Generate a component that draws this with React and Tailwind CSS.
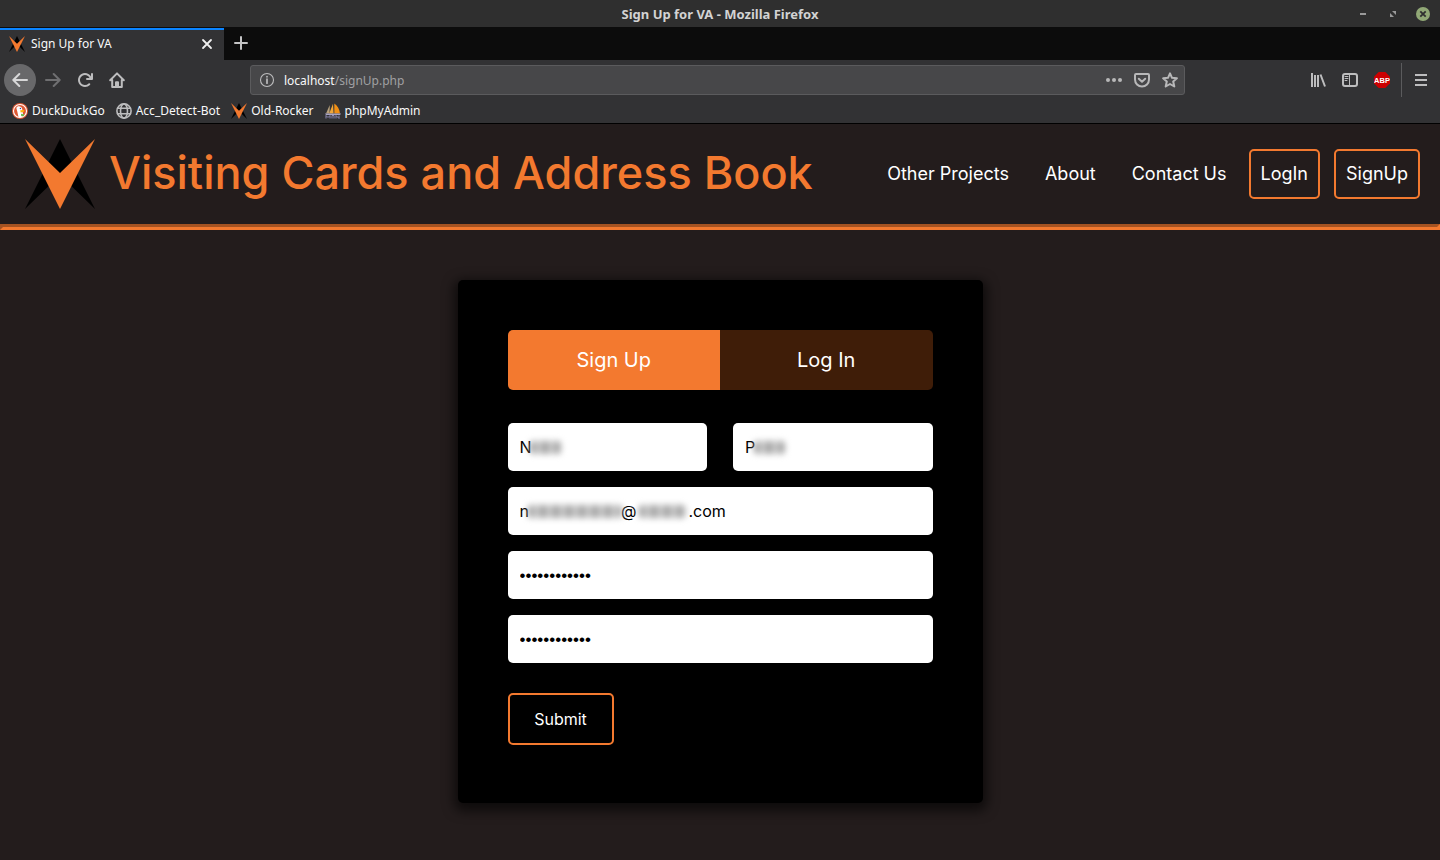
import React from "react";

function Mark({ className }) {
  return (
    <svg viewBox="0 0 70 70" className={className} aria-hidden="true">
      <polygon points="35,0 70,70 35,36 0,70" fill="#000" />
      <polygon points="0,0 35,34 70,0 35,70" fill="#f3792f" />
    </svg>
  );
}

function Icon({ children, className = "size-4", box = "0 0 16 16" }) {
  return (
    <svg
      viewBox={box}
      className={className}
      fill="none"
      stroke="currentColor"
      strokeWidth="2"
      strokeLinecap="round"
      strokeLinejoin="round"
      aria-hidden="true"
    >
      {children}
    </svg>
  );
}

function TitleBar() {
  return (
    <div className="grid h-[27px] grid-cols-[1fr_auto_1fr] items-center bg-[#2f2f2f]">
      <span />
      <span className="pt-px text-[13px] leading-5 font-bold text-[#d3d3d3]">Sign Up for VA - Mozilla Firefox</span>
      <div className="flex items-center justify-end gap-4 pr-[10px] text-[#9a9a9a]">
        <button aria-label="Minimize" className="flex size-[14px]">
          <Icon className="size-[14px]" box="0 0 14 14">
            <path d="M4 7h6" strokeLinecap="butt" />
          </Icon>
        </button>
        <button aria-label="Restore" className="flex size-[14px]">
          <Icon className="size-[14px]" box="0 0 14 14">
            <path d="M6 4h4v4zM4 6v4h4z" fill="currentColor" stroke="none" />
          </Icon>
        </button>
        <button aria-label="Close window" className="flex size-[14px]">
          <Icon className="size-[14px]" box="0 0 14 14">
            <circle cx="7" cy="7" r="7" fill="#91a876" stroke="none" />
            <path d="M4.3 4.3l5.4 5.4M9.7 4.3L4.3 9.7" stroke="#2f2f2f" strokeWidth="1.8" strokeLinecap="butt" />
          </Icon>
        </button>
      </div>
    </div>
  );
}

function TabStrip() {
  return (
    <div className="flex h-[33px] bg-[#0c0c0c] pt-px">
      <div className="flex w-56 items-center border-t-2 border-[#0a84ff] bg-[#323234] pr-[11px] pb-[2px] pl-[9px]">
        <Mark className="size-4" />
        <span className="ml-[6px] flex-1 text-xs text-[#f9f9fa]">Sign Up for VA</span>
        <button aria-label="Close tab" className="text-[#f0f0f0]">
          <Icon className="size-3" box="0 0 12 12">
            <path d="M2 2l8 8M10 2l-8 8" strokeWidth="1.8" />
          </Icon>
        </button>
      </div>
      <button aria-label="New tab" className="ml-[9px] pb-[2px] text-[#c4c4c5]">
        <Icon>
          <path d="M8 2v12M2 8h12" />
        </Icon>
      </button>
    </div>
  );
}

function NavBar() {
  return (
    <div className="flex h-[39px] items-center bg-[#323234] pt-px pr-[11px] text-[#bdbdbe]">
      <div className="flex items-center">
        <button
          aria-label="Back"
          className="ml-1 flex size-8 items-center justify-center rounded-full bg-[#68686a] text-[#d7d7d8]"
        >
          <Icon>
            <path d="M15 8H1.5M7.3 2L1.3 8l6 6" />
          </Icon>
        </button>
        <button aria-label="Forward" className="ml-[9px] text-[#6f6f71]" disabled>
          <Icon>
            <path d="M1 8h13.5M8.7 2l6 6-6 6" />
          </Icon>
        </button>
        <button aria-label="Reload" className="ml-4">
          <Icon>
            <path
              d="M15 1a1 1 0 0 0-1 1v2.418A6.995 6.995 0 1 0 8 15a6.954 6.954 0 0 0 4.95-2.05 1 1 0 0 0-1.414-1.414A5.019 5.019 0 1 1 12.549 6H10a1 1 0 0 0 0 2h5a1 1 0 0 0 1-1V2a1 1 0 0 0-1-1z"
              fill="currentColor"
              stroke="none"
            />
          </Icon>
        </button>
        <button aria-label="Home" className="ml-4">
          <Icon>
            <path d="M1.2 8.2L8 1.4l6.8 6.8M3.2 8v7h9.6V8" />
            <path d="M7 14.5V10.2h2v4.3" />
          </Icon>
        </button>
      </div>
      <div className="ml-[125px] flex h-[30px] w-[935px] min-w-0 items-center rounded-[3px] border border-[#5b5b5d] bg-[#474749] px-[6px]">
        <Icon className="ml-[2px] size-4 shrink-0">
          <circle cx="8" cy="8" r="6.5" strokeWidth="1.1" />
          <path d="M8 7.2v4M8 4.6v.2" strokeWidth="1.7" />
        </Icon>
        <a href="#url" className="ml-[9px] flex-1 pt-[2px] text-xs text-[#a0a0a2]">
          <span className="text-[#f9f9fa]">localhost</span>/signUp.php
        </a>
        <div className="flex gap-3 text-[#b8b8b9]">
          <button aria-label="Page actions">
            <Icon>
              <g fill="currentColor" stroke="none">
                <circle cx="2" cy="8" r="2" />
                <circle cx="8" cy="8" r="2" />
                <circle cx="14" cy="8" r="2" />
              </g>
            </Icon>
          </button>
          <button aria-label="Save to Pocket">
            <Icon>
              <path d="M2 2h12a1 1 0 0 1 1 1v4.5a7 7 0 0 1-14 0V3a1 1 0 0 1 1-1z" />
              <path d="M4.8 6.8L8 9.8l3.2-3" />
            </Icon>
          </button>
          <button aria-label="Bookmark this page">
            <Icon>
              <path d="M8 1.3l2 4.5 4.9.5-3.7 3.2 1.1 5L8 12l-4.3 2.5 1.1-5L1.1 6.3 6 5.8z" />
            </Icon>
          </button>
        </div>
      </div>
      <div className="ml-auto flex items-center">
        <button aria-label="Library">
          <Icon>
            <path d="M2 1v14M5 3v12M8 3v12M10.5 2.5l4.5 12" strokeLinecap="butt" />
          </Icon>
        </button>
        <button aria-label="Sidebars" className="ml-4">
          <Icon>
            <rect x="1" y="2" width="14" height="12" rx="2" />
            <path d="M7.5 2v12" strokeWidth="1" />
            <path d="M3 4.5h3M3 6.5h3M3 8.5h2" strokeWidth="1" />
          </Icon>
        </button>
        <button aria-label="Adblock Plus" className="ml-4">
          <svg viewBox="0 0 16 16" className="size-4" aria-hidden="true">
            <polygon points="4.7,0 11.3,0 16,4.7 16,11.3 11.3,16 4.7,16 0,11.3 0,4.7" fill="#cc0000" />
            <text x="8" y="10.6" textAnchor="middle" fontFamily="Liberation Sans" fontWeight="700" fontSize="7.5" fill="#fff">
              ABP
            </text>
          </svg>
        </button>
        <span className="ml-[11px] h-[34px] w-px bg-[#5b5b5d]" />
        <button aria-label="Menu" className="ml-[11px]">
          <Icon>
            <path d="M2 3h12M2 8h12M2 13h12" strokeLinecap="butt" />
          </Icon>
        </button>
      </div>
    </div>
  );
}

function Bookmarks() {
  return (
    <nav aria-label="Bookmarks" className="flex h-[25px] items-center gap-[11px] border-b border-black bg-[#323234] pl-3 text-xs text-[#f9f9fa]">
      <a href="#duckduckgo" className="flex items-center gap-1">
        <svg viewBox="0 0 16 16" className="size-4" aria-hidden="true">
          <circle cx="8" cy="8" r="8" fill="#de5833" />
          <circle cx="8" cy="8" r="6.5" fill="none" stroke="#fff" strokeWidth="1.1" />
          <path d="M4.4 5.2C4.8 2.4 9.8 2.6 10.2 6l.4 3 .8 4c-1.2 1-3.6 1.3-5 .7L5.4 9z" fill="#fff" />
          <path d="M8.2 7.3l4.3-.3-.6 1.8-3.2.8z" fill="#fdb50a" />
          <path d="M9 10.8l3.4.6-.8 1.9-2.4-.2z" fill="#65bc46" />
          <circle cx="8.4" cy="5.5" r="0.7" fill="#2d4f8e" />
        </svg>
        DuckDuckGo
      </a>
      <a href="#acc-detect-bot" className="flex items-center gap-1">
        <Icon className="size-4 text-[#bdbdbe]">
          <g strokeWidth="1.6">
            <circle cx="8" cy="8" r="7.1" />
            <ellipse cx="8" cy="8" rx="3.5" ry="7.1" />
            <path d="M1.6 5.3h12.8M1.6 10.7h12.8" />
          </g>
        </Icon>
        Acc_Detect-Bot
      </a>
      <a href="#old-rocker" className="flex items-center gap-1">
        <Mark className="size-4" />
        Old-Rocker
      </a>
      <a href="#phpmyadmin" className="flex items-center gap-1">
        <svg viewBox="0 0 16 16" className="size-4" aria-hidden="true">
          <path d="M4.8 2L1 10.500h3.5z" fill="#b9a27c" />
          <path d="M8 0.8L4.2 10.5h4.4z" fill="#f0a63a" />
          <path d="M9.3 0.5c3 2 5.2 5.5 5.7 10H9.3z" fill="#f18f14" />
          <path d="M0 10.5h16l-1 1.5H1z" fill="#a8a4c4" />
          <path d="M1 15.5v-3l2 2 2-2v3M7 15.5v-3h2v3M11 15.5v-3l3 3v-3" fill="none" stroke="#8d89b4" strokeWidth="1" />
        </svg>
        phpMyAdmin
      </a>
    </nav>
  );
}

function SiteHeader() {
  return (
    <header>
      <div className="flex min-h-[100px] items-center justify-between gap-6 pr-5 pl-[25px]">
        <div className="flex items-center gap-[14px]">
          <Mark className="size-[70px] shrink-0" />
          <h1 className="pb-[2px] text-[45px] leading-[60px] font-medium whitespace-nowrap text-[#f3792f]">
            Visiting Cards and Address Book
          </h1>
        </div>
        <nav aria-label="Main" className="flex items-center text-[18px] leading-6 whitespace-nowrap text-white">
          <a href="#projects">Other Projects</a>
          <a href="#about" className="ml-9">About</a>
          <a href="#contact" className="ml-9">Contact Us</a>
          <a href="#login" className="ml-[22px] rounded-[5px] border-2 border-[#f3792f] px-[10px] py-[11px]">LogIn</a>
          <a href="#signup" className="ml-[14px] rounded-[5px] border-2 border-[#f3792f] px-[10px] py-[11px]">SignUp</a>
        </nav>
      </div>
      <hr className="h-[6px] border-[3px] border-t-[#a55322] border-r-[#f3792f] border-b-[#f3792f] border-l-[#a55322]" />
    </header>
  );
}

function Smudge({ className }) {
  return (
    <span
      aria-hidden="true"
      className={`pointer-events-none absolute top-[18px] h-[13px] rounded-sm bg-[repeating-linear-gradient(90deg,#9a9a9a_0_4px,#c4c4c4_4px_13px)] blur-[3px] ${className}`}
    />
  );
}

function Field({ label, children, className = "text-base", ...input }) {
  return (
    <div className="relative min-w-0">
      <input
        aria-label={label}
        className={`block h-12 w-full rounded-[5px] bg-white px-3 text-black outline-none ${className}`}
        {...input}
      />
      {children}
    </div>
  );
}

const dots = "font-['Liberation_Sans',sans-serif] text-[17px] pt-[2px]";

function SignUpCard() {
  return (
    <form
      onSubmit={(e) => e.preventDefault()}
      className="mx-auto mt-[50px] w-full max-w-[525px] rounded-[5px] bg-black px-[50px] pt-[50px] pb-[58px] shadow-[0_4px_12px_4px_rgba(0,0,0,0.6)]"
    >
      <div className="grid h-[60px] grid-cols-2 overflow-hidden rounded-[5px] text-xl text-white">
        <button type="button" className="bg-[#f3792f]">Sign Up</button>
        <button type="button" className="bg-[#3f1d08]">Log In</button>
      </div>
      <div className="mt-[33px] flex flex-col gap-4">
        <div className="grid grid-cols-2 gap-[26px]">
          <Field label="First name" type="text" defaultValue="N">
            <Smudge className="left-[22px] w-[31px]" />
          </Field>
          <Field label="Last name" type="text" defaultValue="P">
            <Smudge className="left-[21px] w-[31px]" />
          </Field>
        </div>
        <Field
          label="Email"
          type="text"
          defaultValue={"n\u2003\u2003\u2003\u2003\u2003\u2002\u2005@\u2003\u2003\u2003\u2005.com"}
        >
          <Smudge className="left-[20px] w-[94px]" />
          <Smudge className="left-[131px] w-[47px]" />
        </Field>
        <Field label="Password" type="password" defaultValue="............" className={dots} />
        <Field label="Confirm password" type="password" defaultValue="............" className={dots} />
      </div>
      <button type="submit" className="mt-[30px] h-[52px] w-[106px] rounded-[5px] border-2 border-[#f3792f] text-base text-white">
        Submit
      </button>
    </form>
  );
}

export default function App() {
  return (
    <div className="flex min-h-screen flex-col">
      <div className="font-['Noto_Sans',sans-serif]">
        <TitleBar />
        <TabStrip />
        <NavBar />
        <Bookmarks />
      </div>
      <div className="flex-1 bg-[#231c1c] pb-[57px] font-['Inter',sans-serif]">
        <SiteHeader />
        <main>
          <SignUpCard />
        </main>
      </div>
    </div>
  );
}
